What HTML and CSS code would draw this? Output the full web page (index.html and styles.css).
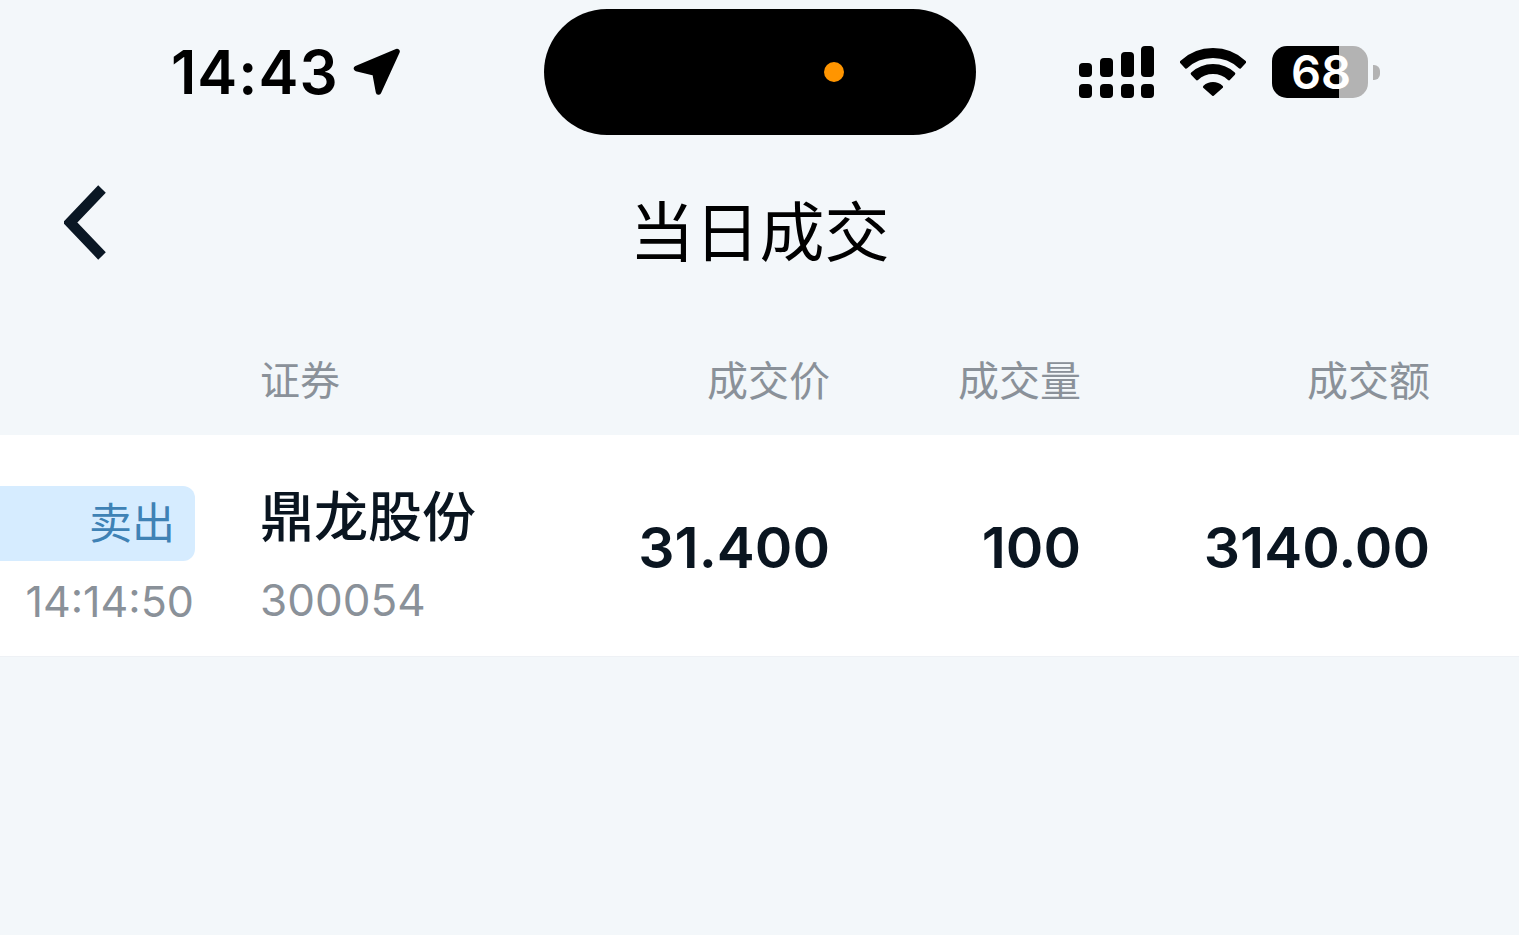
FILE: index.html
```html
<!DOCTYPE html>
<html lang="zh-CN">
<head>
    <meta charset="UTF-8">
    <meta name="viewport" content="width=device-width, initial-scale=1.0">
    <title>当日成交</title>
    <link rel="stylesheet" href="styles.css">
</head>
<body>
    <div class="status-bar">
        <div class="status-left">
            <span class="clock">14:43</span>
            <svg class="location" viewBox="0 0 48 48"><path d="M44 3.5L3.5 20.5L22 25L25.5 44Z"/></svg>
        </div>
        <div class="island"><span class="island-dot"></span></div>
        <div class="status-right">
            <svg class="signal" viewBox="0 0 76 52">
                <rect x="0" y="17" width="13" height="14" rx="4"/>
                <rect x="21" y="12" width="13" height="19" rx="4"/>
                <rect x="42" y="6" width="13" height="25" rx="4"/>
                <rect x="62" y="0" width="13" height="31" rx="4"/>
                <rect x="0" y="38" width="13" height="14" rx="4"/>
                <rect x="21" y="38" width="13" height="14" rx="4"/>
                <rect x="42" y="38" width="13" height="14" rx="4"/>
                <rect x="62" y="38" width="13" height="14" rx="4"/>
            </svg>
            <svg class="wifi" viewBox="0 0 66 48">
                <path d="M1.3 14A46.5 46.5 0 0 1 64.7 14L59.9 19.1A39.5 39.5 0 0 0 6.1 19.1Z"/>
                <path d="M12.2 25.7A30.5 30.5 0 0 1 53.8 25.7L49 30.8A23.5 23.5 0 0 0 17 30.8Z"/>
                <path d="M24.5 38.9A12.5 12.5 0 0 1 41.5 38.9L33 46.5Z"/>
            </svg>
            <div class="battery">
                <div class="battery-body">68</div>
                <div class="battery-nub"></div>
            </div>
        </div>
    </div>

    <div class="nav-bar">
        <svg class="back" viewBox="0 0 44 80"><path d="M38 6L6 39.5L38 73"/></svg>
        <h1 class="nav-title">当日成交</h1>
    </div>

    <div class="table-row table-head">
        <span></span>
        <span class="col-name">证券</span>
        <span class="col-num">成交价</span>
        <span class="col-num">成交量</span>
        <span class="col-num">成交额</span>
    </div>

    <div class="table-row trade">
        <div class="trade-side">
            <div class="badge">卖出</div>
            <div class="trade-time">14:14:50</div>
        </div>
        <div class="trade-stock">
            <div class="stock-name">鼎龙股份</div>
            <div class="stock-code">300054</div>
        </div>
        <span class="col-num trade-num">31.400</span>
        <span class="col-num trade-num">100</span>
        <span class="col-num trade-num">3140.00</span>
    </div>
</body>
</html>
```

FILE: styles.css
```css
html, body {
    height: 100%;
    margin: 0;
    overflow: hidden;
}
body {
    font-family: Inter, "Noto Sans CJK SC", sans-serif;
    background-color: #f3f7fa;
    color: #0a1520;
}

/* status bar */
.status-bar {
    display: grid;
    grid-template-columns: 544px 432px 1fr;
    height: 145px;
    padding-top: 9px;
    box-sizing: border-box;
}
.status-left {
    display: flex;
    align-items: center;
    height: 126px;
    padding-left: 171px;
}
.clock {
    font-size: 60px;
    font-weight: 600;
    letter-spacing: 1px;
    color: #000;
}
.location {
    width: 48px;
    height: 48px;
    margin-left: 14px;
    fill: #000;
    stroke: #000;
    stroke-width: 5.5;
    stroke-linejoin: round;
}
.island {
    height: 126px;
    border-radius: 63px;
    background-color: #000;
    display: flex;
    align-items: center;
    padding-left: 280px;
    box-sizing: border-box;
}
.island-dot {
    width: 20px;
    height: 20px;
    border-radius: 50%;
    background-color: #ff9500;
}
.status-right {
    display: flex;
    align-items: center;
    height: 126px;
    padding-left: 103px;
}
.signal {
    width: 76px;
    height: 52px;
    fill: #000;
}
.wifi {
    width: 66px;
    height: 48px;
    margin-left: 25px;
    fill: #000;
    stroke: #000;
    stroke-width: 3;
    stroke-linejoin: round;
}
.battery {
    display: flex;
    align-items: center;
    margin-left: 26px;
}
.battery-body {
    width: 96px;
    height: 52px;
    border-radius: 15px;
    background: linear-gradient(90deg, #000 70%, #b3b3b3 70%);
    color: #fff;
    font-size: 47px;
    font-weight: 600;
    line-height: 52px;
    text-align: center;
    padding-left: 2px;
    box-sizing: border-box;
}
.battery-nub {
    width: 7px;
    height: 15px;
    margin-left: 5px;
    border-radius: 0 6px 6px 0;
    background-color: #b3b3b3;
}

/* nav */
.nav-bar {
    display: flex;
    align-items: center;
    justify-content: center;
    height: 175px;
    position: relative;
}
.back {
    position: absolute;
    left: 64px;
    top: 38px;
    width: 44px;
    height: 80px;
    fill: none;
    stroke: #0a1724;
    stroke-width: 10.5;
    stroke-linejoin: miter;
}
.nav-title {
    margin: 0;
    font-size: 65px;
    font-weight: 400;
    color: #000;
    line-height: 1;
}

/* table */
.table-row {
    display: grid;
    grid-template-columns: 260px 1fr 250px 251px 349px;
    padding-right: 89px;
    align-items: center;
}
.table-head {
    height: 115px;
    box-sizing: border-box;
    font-size: 41px;
    color: #8a9199;
}
.col-name {
    font-size: 40px;
}
.col-num {
    text-align: right;
}
.trade {
    height: 222px;
    box-sizing: border-box;
    background-color: #fff;
    border-bottom: 1px solid #eef1f5;
}
.trade-side {
    align-self: start;
    width: 195px;
    padding-top: 51px;
}
.badge {
    height: 75px;
    line-height: 75px;
    padding-right: 20px;
    text-align: right;
    font-size: 43px;
    color: #3f82b5;
    background-color: #d6ecff;
    border-radius: 0 12px 12px 0;
}
.trade-time {
    margin-top: 14px;
    padding-right: 1px;
    text-align: right;
    font-size: 43px;
    color: #8a9199;
}
.trade-stock {
    align-self: start;
    padding-top: 51px;
}
.stock-name {
    font-size: 54px;
    font-weight: 500;
    line-height: 64px;
}
.stock-code {
    margin-top: 23px;
    font-size: 44px;
    color: #8a9199;
}
.trade-num {
    padding-top: 3px;
    font-size: 57px;
    font-weight: 600;
}
```
